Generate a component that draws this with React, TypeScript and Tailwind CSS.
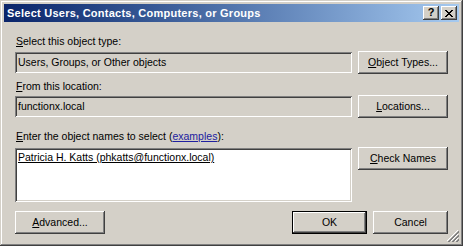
import React from 'react';

/*
    Classic "Select Users, Contacts, Computers, or Groups" dialog
*/

const raised = "shadow-[inset_-1px_-1px_#404040,inset_1px_1px_#ffffff,inset_-2px_-2px_#808080,inset_2px_2px_#d4d0c8]";
const sunken = "shadow-[inset_1px_1px_#808080,inset_-1px_-1px_#ffffff,inset_2px_2px_#404040,inset_-2px_-2px_#d4d0c8]";

function Key(props: { k: string; rest: string }) {
    return (
        <>
            <span className="underline underline-offset-[1px]">{props.k}</span>
            {props.rest}
        </>
    );
}

function Button(props: { children: React.ReactNode; width: string; isDefault?: boolean }) {
    if (props.isDefault) {
        return (
            <div className={`${props.width} h-[23px] border border-black bg-[#d4d0c8] flex`}>
                <div className={`flex-1 flex items-center justify-center ${raised}`}>{props.children}</div>
            </div>
        );
    }
    return (
        <div className={`${props.width} h-[23px] bg-[#d4d0c8] flex items-center justify-center ${raised}`}>
            {props.children}
        </div>
    );
}

function TitleButton(props: { children: React.ReactNode }) {
    return (
        <div className={`w-[16px] h-[14px] bg-[#d4d0c8] flex items-center justify-center ${raised}`}>
            {props.children}
        </div>
    );
}

export default function App() {
    return (
        <div className="w-[463px] h-[246px] bg-[#d4d0c8] relative p-[4px] font-['Liberation_Sans',Arial,sans-serif] text-[10.5px] leading-[13px] text-black shadow-[inset_-1px_-1px_#404040,inset_1px_1px_#d4d0c8,inset_-2px_-2px_#808080,inset_2px_2px_#ffffff]">
            {/* title bar */}
            <div className="h-[18px] flex items-center justify-between pl-[3px] pr-[2px] bg-gradient-to-r from-[#0a246a] to-[#a6caf0]">
                <span className="text-white font-bold text-[11px] tracking-[0.25px]">Select Users, Contacts, Computers, or Groups</span>
                <div className="flex items-center gap-[2px]">
                    <TitleButton>
                        <span className="font-bold text-[11px] leading-[11px] -mt-[1px]">?</span>
                    </TitleButton>
                    <TitleButton>
                        <svg width="8" height="7" viewBox="0 0 8 7" shapeRendering="crispEdges">
                            <path d="M0 0h2v1H0zM6 0h2v1H6zM1 1h2v1H1zM5 1h2v1H5zM2 2h4v1H2zM3 3h2v1H3zM2 4h4v1H2zM1 5h2v1H1zM5 5h2v1H5zM0 6h2v1H0zM6 6h2v1H6z" fill="#000" />
                        </svg>
                    </TitleButton>
                </div>
            </div>

            {/* body */}
            <div className="px-[11px] pt-[13px] flex flex-col">
                <p className="pl-[1px]"><Key k="S" rest="elect this object type:" /></p>
                <div className="flex items-center gap-[6px] mt-[3px]">
                    <div className={`w-[337px] h-[21px] flex items-center pl-[3px] ${sunken}`}>
                        Users, Groups, or Other objects
                    </div>
                    <Button width="w-[90px]"><Key k="O" rest="bject Types..." /></Button>
                </div>

                <p className="pl-[1px] mt-[6px]"><Key k="F" rest="rom this location:" /></p>
                <div className="flex items-center gap-[6px] mt-[2px]">
                    <div className={`w-[337px] h-[21px] flex items-center pl-[3px] ${sunken}`}>
                        functionx.local
                    </div>
                    <Button width="w-[90px]"><Key k="L" rest="ocations..." /></Button>
                </div>

                <p className="pl-[1px] mt-[12px]">
                    <Key k="E" rest="nter the object names to select (" />
                    <span className="text-[#2020a0] underline">examples</span>):
                </p>
                <div className="flex items-start gap-[6px] mt-[4px]">
                    <div className={`w-[337px] h-[54px] mt-[1px] bg-white pl-[3px] pt-[3px] ${sunken}`}>
                        <span className="underline">Patricia H. Katts (phkatts@functionx.local)</span>
                    </div>
                    <Button width="w-[90px]"><Key k="C" rest="heck Names" /></Button>
                </div>

                <div className="flex items-center mt-[9px]">
                    <Button width="w-[90px]"><Key k="A" rest="dvanced..." /></Button>
                    <div className="flex-1" />
                    <Button width="w-[75px]" isDefault>OK</Button>
                    <div className="w-[6px]" />
                    <Button width="w-[75px]">Cancel</Button>
                </div>
            </div>

            {/* size grip */}
            <svg className="absolute right-[4px] bottom-[4px]" width="12" height="12" viewBox="0 0 12 12" shapeRendering="crispEdges">
                <path d="M11 0L0 11M11 4L4 11M11 8L8 11" stroke="#ffffff" strokeWidth="1" />
                <path d="M12 1L1 12M12 2L2 12M12 5L5 12M12 6L6 12M12 9L9 12M12 10L10 12" stroke="#808080" strokeWidth="1" />
            </svg>
        </div>
    );
}
